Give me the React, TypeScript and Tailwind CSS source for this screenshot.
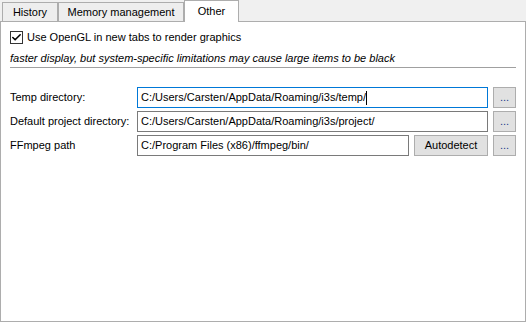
import { Check } from 'lucide-react';

const font = { fontFamily: '"Liberation Sans", Arial, sans-serif' };

const Tab = ({ label, active, className = '' }: { label: string; active?: boolean; className?: string }) =>
  active ? (
    <div className={`relative z-10 h-[22px] bg-white border border-b-0 border-[#adadad] flex items-center justify-center ${className}`}>
      {label}
    </div>
  ) : (
    <div className={`h-[20px] bg-[#eeeeee] border border-[#adadad] flex items-center justify-center ${className}`}>
      {label}
    </div>
  );

const PathInput = ({ value, focused, className = '' }: { value: string; focused?: boolean; className?: string }) => (
  <div
    className={`h-[21px] flex items-center px-[3px] bg-white border ${
      focused ? 'border-[#0078d7]' : 'border-[#7a7a7a]'
    } ${className}`}
  >
    <span>{value}</span>
    {focused && <span className="w-px h-[14px] bg-black" />}
  </div>
);

const Button = ({ label, className = '' }: { label: string; className?: string }) => (
  <div className={`h-[21px] flex items-center justify-center bg-[#e1e1e1] border border-[#adadad] ${className}`}>
    {label}
  </div>
);

const Row = ({ label, value, focused, auto }: { label: string; value: string; focused?: boolean; auto?: boolean }) => (
  <div className="flex items-center h-[21px]">
    <div className="w-[127px] shrink-0 whitespace-nowrap">{label}</div>
    <PathInput value={value} focused={focused} className="flex-1" />
    {auto && <Button label="Autodetect" className="w-[74px] ml-[5px]" />}
    <Button label="..." className="w-[23px] ml-[5px] text-[#1a3c8c]" />
  </div>
);

export default function App() {
  return (
    <div className="w-[526px] h-[322px] bg-[#f0f0f0] flex flex-col text-[11px] text-black" style={font}>
      <div className="flex items-end h-[22px] pl-[2px] shrink-0">
        <Tab label="History" className="w-[56px]" />
        <Tab label="Memory management" className="w-[126px]" />
        <Tab label="Other" active className="w-[55px]" />
      </div>
      <div className="flex-1 -mt-px bg-white border border-[#adadad] pl-[9px] pr-[9px] pt-[8px]">
        <div className="flex items-center gap-[4px] h-[14px]">
          <div className="w-[13px] h-[13px] border border-[#333333] bg-white flex items-center justify-center">
            <Check size={11} strokeWidth={3.5} />
          </div>
          <span>Use OpenGL in new tabs to render graphics</span>
        </div>
        <div className="italic mt-[8px] h-[13px] leading-[13px]">
          faster display, but system-specific limitations may cause large items to be black
        </div>
        <div className="mt-[2px] h-px bg-[#a0a0a0]" />
        <div className="mt-[19px] flex flex-col gap-[3px]">
          <Row label="Temp directory:" value="C:/Users/Carsten/AppData/Roaming/i3s/temp/" focused />
          <Row label="Default project directory:" value="C:/Users/Carsten/AppData/Roaming/i3s/project/" />
          <Row label="FFmpeg path" value="C:/Program Files (x86)/ffmpeg/bin/" auto />
        </div>
      </div>
    </div>
  );
}
